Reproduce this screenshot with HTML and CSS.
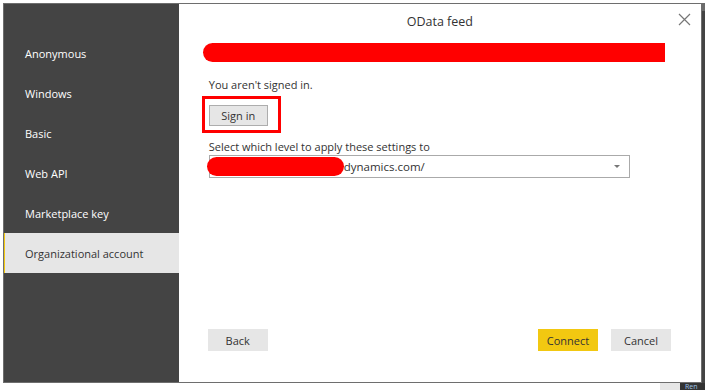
FILE: index.html
```html
<!DOCTYPE html>
<html lang="en">
<head>
    <meta charset="UTF-8">
    <title>OData feed</title>
    <link rel="stylesheet" href="styles.css">
</head>
<body>
    <div class="screen">
        <div class="dialog" role="dialog">
            <nav class="authMenu">
                <ul>
                    <li><button class="authMenu__item">Anonymous</button></li>
                    <li><button class="authMenu__item">Windows</button></li>
                    <li><button class="authMenu__item">Basic</button></li>
                    <li><button class="authMenu__item">Web API</button></li>
                    <li><button class="authMenu__item">Marketplace key</button></li>
                    <li><button class="authMenu__item active">Organizational account</button></li>
                </ul>
            </nav>
            <main class="pane">
                <header class="pane__title">
                    OData feed
                    <button class="close" aria-label="Close">
                        <svg width="13" height="13" viewBox="0 0 13 13"><path d="M1 1L12 12M12 1L1 12" stroke="#777" stroke-width="1.2"/></svg>
                    </button>
                </header>
                <div class="redact redact--url"></div>
                <p class="status">You aren't signed in.</p>
                <div class="highlight">
                    <button class="btn btn--small">Sign in</button>
                </div>
                <label class="levelLabel">Select which level to apply these settings to</label>
                <div class="select">
                    <span class="redact redact--host"></span>
                    <span class="select__value">dynamics.com/</span>
                    <span class="select__arrow"></span>
                </div>
                <footer class="pane__footer">
                    <button class="btn">Back</button>
                    <span class="spacer"></span>
                    <button class="btn btn--primary">Connect</button>
                    <button class="btn">Cancel</button>
                </footer>
            </main>
            <div class="backdrop backdrop--right"></div>
        </div>
        <div class="backdrop backdrop--bottom">
            <span class="backdrop__light"></span>
            <span class="backdrop__dark">Ren</span>
        </div>
    </div>
</body>
</html>
```

FILE: styles.css
```css
:root {--menu-bg: #444444;--light: #e6e6e6;--accent: #f2c811;--text: #333333;--red: #ff0000;}
* {box-sizing: border-box;}
body {margin: 0;padding: 0;background: #ffffff;font-family: "Open Sans", "Noto Sans", sans-serif;font-size: 11px;color: var(--text);}
button {font-family: inherit;font-size: inherit;color: inherit;}
.screen {width: 705px;height: 390px;padding: 3px 0 0 3px;display: flex;flex-direction: column;}
.dialog {display: flex;width: 702px;height: 380px;}
.authMenu {width: 176px;background: var(--menu-bg);border: 1px solid #6e6e6e;border-right: none;padding-top: 29px;}
.authMenu ul {list-style-type: none;margin: 0;padding: 0;}
.authMenu li {display: block;}
.authMenu__item {display: block;width: 100%;height: 40px;border: none;border-left: 1px solid transparent;background: none;color: #ffffff;text-align: left;padding: 0 0 0 20px;}
.authMenu__item.active {background: var(--light);color: var(--text);border-left-color: var(--accent);}
.pane {position: relative;width: 524px;background: #ffffff;border-top: 1px solid #6e6e6e;border-bottom: 1px solid #6e6e6e;border-right: 1px solid #6e6e6e;display: flex;flex-direction: column;padding: 0 30px 0 29px;}
.pane__title {height: 39px;padding-top: 9px;text-align: center;font-size: 12.5px;margin: 0 -30px 0 -29px;}
.close {position: absolute;right: 10px;top: 9px;border: none;background: none;padding: 0;width: 13px;height: 13px;}
.redact {display: block;background: var(--red);border-radius: 10px 0 0 10px;}
.redact--url {width: 462px;height: 19px;margin-left: -5px;}
.status {margin: 15px 0 0 1px;line-height: 16px;}
.highlight {width: 79px;height: 37px;margin: 3px 0 0 -6px;border: 3px solid var(--red);padding: 6px 0 0 4px;}
.btn {height: 22px;width: 60px;border: none;background: var(--light);padding: 0;}
.btn--small {width: 59px;height: 21px;border: 1px solid #adadad;}
.btn--primary {background: var(--accent);}
.levelLabel {display: block;margin: 6px 0 0 1px;line-height: 16px;}
.select {display: flex;align-items: center;width: 421px;height: 23px;margin-left: 1px;border: 1px solid #aaaaaa;}
.select .redact {width: 137px;height: 19px;margin-left: -3px;border-radius: 10px;}
.select__value {flex: 1;font-size: 11.5px;}
.select__arrow {width: 0;height: 0;border-left: 3px solid transparent;border-right: 3px solid transparent;border-top: 3px solid #777;margin-right: 9px;}
.pane__footer {margin-top: auto;margin-bottom: 31px;display: flex;gap: 13px;}
.spacer {flex: 1;}
.backdrop--right {width: 3px;background: linear-gradient(#6b6b6b 0 8px, #444 8px 100%);}
.backdrop--bottom {display: flex;height: 7px;margin-left: -3px;}
.backdrop__light {flex: 1;background: #ffffff;border-right: 20px solid var(--light);}
.backdrop__dark {width: 25px;background: #333333;color: #9ec3e6;font-size: 7px;line-height: 7px;padding-left: 5px;overflow: hidden;}
```
